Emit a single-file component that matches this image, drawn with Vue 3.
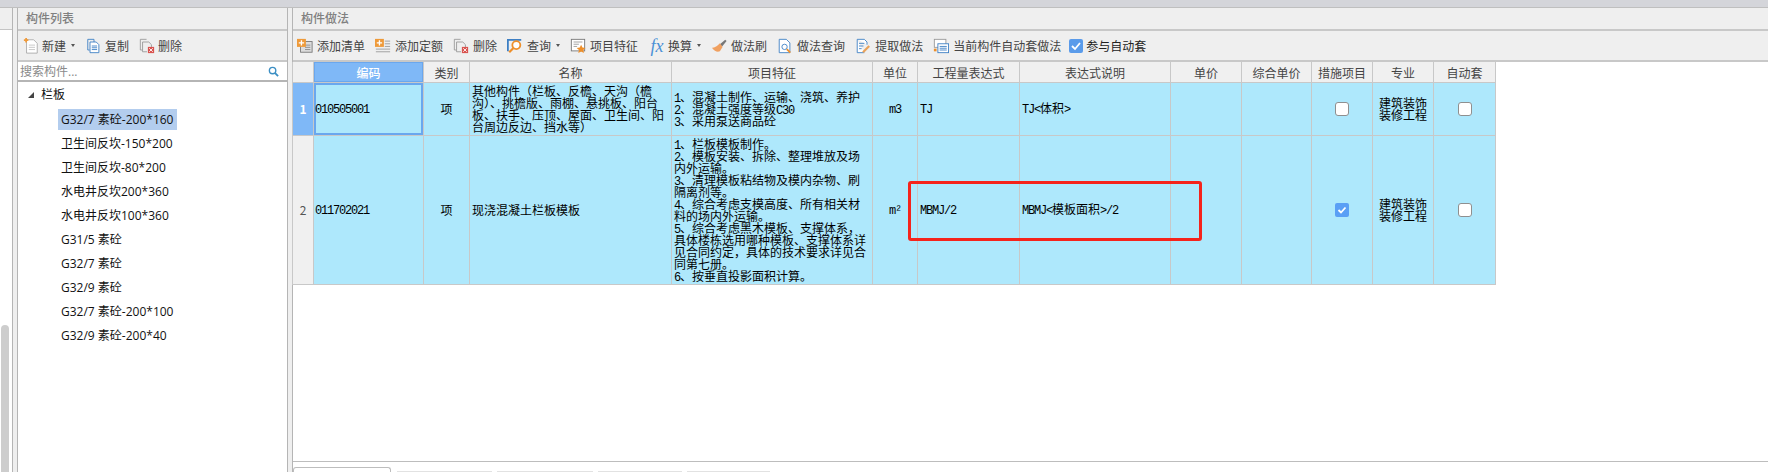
<template>
  <div class="page">
    <div class="top-strip"></div>
    <div class="panes">
      <!-- sliver of the navigation pane on the far left -->
      <div class="nav-pane">
        <div class="nav-head"></div>
        <div class="nav-body">
          <div class="nav-thumb"></div>
        </div>
      </div>

      <div class="list-pane">
        <div class="pane-title">构件列表</div>
        <div class="toolbar list-tools">
          <div class="tool">
            <svg class="ico" viewBox="0 0 18 18">
              <path d="M4 2h8l4 4v11H4z" fill="#fff" stroke="#a9a9a9" />
              <path d="M6.500 8h7M6.500 10.500h7M6.500 13h7" stroke="#c4c4c4" />
              <path d="M1 2.500h5M3.500 0v5" stroke="#ef9b3c" stroke-width="2" />
            </svg>
            <span>新建</span><i class="caret"></i>
          </div>
          <div class="tool">
            <svg class="ico" viewBox="0 0 18 18">
              <path d="M2 1.500h7v3" fill="none" stroke="#3d7fc4" />
              <path d="M2 1.500v12h2" fill="none" stroke="#3d7fc4" />
              <path d="M4.500 4.500h7l3 3v9h-10z" fill="#fff" stroke="#3d7fc4" />
              <path d="M6.500 9h6M6.500 11h6M6.500 13h6" stroke="#3d7fc4" />
            </svg>
            <span>复制</span>
          </div>
          <div class="tool">
            <svg class="ico" viewBox="0 0 18 18">
              <path d="M1.500 1.500h7M1.500 1.500v12h2" fill="none" stroke="#999" />
              <path d="M4 4.500h7l3 3v3M4 4.500v11h5" fill="none" stroke="#999" />
              <rect x="10" y="10" width="7" height="7" fill="#d9534f" />
              <path d="M11.500 11.500l4 4M15.500 11.500l-4 4" stroke="#fff" />
            </svg>
            <span>删除</span>
          </div>
        </div>
        <div class="search">
          <span class="search-text">搜索构件...</span>
          <svg class="search-ico" viewBox="0 0 12 12">
            <circle cx="5" cy="5" r="3.500" fill="none" stroke="#3c8fc4" stroke-width="1.500" />
            <path d="M7.500 7.500l3.500 3.500" stroke="#3c8fc4" stroke-width="2" />
          </svg>
        </div>
        <div class="tree">
          <div class="tree-root"><i class="tree-arrow"></i>栏板</div>
          <div
            v-for="(item, i) in treeItems"
            :key="item"
            class="tree-item"
          >
            <span :class="{ picked: i === 0 }">{{ item }}</span>
          </div>
        </div>
      </div>

      <div class="main-pane">
        <div class="pane-title">构件做法</div>
        <div class="toolbar main-tools">
          <div class="tool">
            <svg class="ico" viewBox="0 0 18 18">
              <rect x="4" y="4" width="13" height="12" fill="#ddd" stroke="#777" />
              <path d="M9 8h6M9 10.500h6M9 13h6" stroke="#888" />
              <rect x="0" y="1" width="10" height="9" fill="#ee9a3a" />
              <path d="M2 5.500h6M5 2.500v6" stroke="#fff" stroke-width="1.500" />
            </svg>
            <span>添加清单</span>
          </div>
          <div class="tool">
            <svg class="ico" viewBox="0 0 18 18">
              <rect x="0" y="1" width="10" height="9" fill="#ee9a3a" />
              <path d="M2 5.500h6M5 2.500v6" stroke="#fff" stroke-width="1.500" />
              <path d="M11 3.500h6M11 6.500h6M11 9.500h6M1 12.500h16M1 15.500h16" stroke="#999" />
            </svg>
            <span>添加定额</span>
          </div>
          <div class="tool">
            <svg class="ico" viewBox="0 0 18 18">
              <path d="M1.500 1.500h7M1.500 1.500v12h2" fill="none" stroke="#999" />
              <path d="M4 4.500h7l3 3v3M4 4.500v11h5" fill="none" stroke="#999" />
              <rect x="10" y="10" width="7" height="7" fill="#d9534f" />
              <path d="M11.500 11.500l4 4M15.500 11.500l-4 4" stroke="#fff" />
            </svg>
            <span>删除</span>
          </div>
          <div class="tool">
            <svg class="ico" viewBox="0 0 18 18">
              <path d="M1 15V2h15" fill="none" stroke="#3d7fc4" stroke-width="2" />
              <circle cx="10.500" cy="8" r="4.500" fill="#fff" stroke="#ee8f2a" stroke-width="2" />
              <path d="M7 11.500L2.500 16" stroke="#ee8f2a" stroke-width="2.500" />
            </svg>
            <span>查询</span><i class="caret"></i>
          </div>
          <div class="tool">
            <svg class="ico" viewBox="0 0 18 18">
              <rect x="1.500" y="1.500" width="15" height="13" fill="#fff" stroke="#777" />
              <path d="M4 4.500h10M4 7h6M4 9.500h4" stroke="#999" />
              <path d="M12.500 7.500l1.500 3.300 3.500.4-2.600 2.300.8 3.500-3.200-1.800-3.200 1.800.8-3.500-2.600-2.300 3.500-.4z" fill="#ee8f2a" />
            </svg>
            <span>项目特征</span>
          </div>
          <div class="tool fx-tool">
            <span class="fx">fx</span>
            <span>换算</span><i class="caret"></i>
          </div>
          <div class="tool">
            <svg class="ico" viewBox="0 0 18 18">
              <path d="M10 7l6-5 1.500 1.500-5 6z" fill="#777" />
              <path d="M10 6l3 4-3 5C7 16 4 15 1 11c3 0 5-1 9-5z" fill="#f0a060" />
            </svg>
            <span>做法刷</span>
          </div>
          <div class="tool">
            <svg class="ico" viewBox="0 0 18 18">
              <path d="M2.500 1.500h8l4 4v11h-12z" fill="#fff" stroke="#3d7fc4" />
              <circle cx="8.500" cy="10" r="3" fill="none" stroke="#3d7fc4" />
              <path d="M11 12.500l4 4" stroke="#ee8f2a" stroke-width="2" />
            </svg>
            <span>做法查询</span>
          </div>
          <div class="tool">
            <svg class="ico" viewBox="0 0 18 18">
              <path d="M2.500 1.500h8l3 3v3M2.500 1.500v15h8" fill="#fff" stroke="#3d7fc4" />
              <path d="M4.500 6h6M4.500 9h5M4.500 12h3" stroke="#3d7fc4" />
              <path d="M9 16l7-7" stroke="#e9a25a" stroke-width="2.500" />
            </svg>
            <span>提取做法</span>
          </div>
          <div class="tool">
            <svg class="ico" viewBox="0 0 18 18">
              <rect x="1.500" y="1.500" width="13" height="9" fill="#fff" stroke="#999" />
              <rect x="5.500" y="6.500" width="12" height="10" fill="#fff" stroke="#3d7fc4" />
              <path d="M7.500 9.500h8M7.500 11.500h8M7.500 13.500h8" stroke="#3d7fc4" />
              <rect x="1" y="12" width="3" height="3" fill="#ee8f2a" />
            </svg>
            <span>当前构件自动套做法</span>
          </div>
          <div class="tool check-tool">
            <svg class="check-box" viewBox="0 0 14 14">
              <rect width="14" height="14" rx="2" fill="#5a9bea" />
              <path d="M3 7l3 3 5-6" fill="none" stroke="#fff" stroke-width="1.800" />
            </svg>
            <span class="dark">参与自动套</span>
          </div>
        </div>

        <div class="table-wrap">
          <table class="grid">
            <colgroup>
              <col v-for="w in colWidths" :key="w.id" :style="{ width: w.px + 'px' }" />
            </colgroup>
            <thead>
              <tr>
                <th></th>
                <th class="on">编码</th>
                <th>类别</th>
                <th>名称</th>
                <th>项目特征</th>
                <th>单位</th>
                <th>工程量表达式</th>
                <th>表达式说明</th>
                <th>单价</th>
                <th>综合单价</th>
                <th>措施项目</th>
                <th>专业</th>
                <th>自动套</th>
              </tr>
            </thead>
            <tbody>
              <tr v-for="(row, r) in rows" :key="row.code" :style="{ height: row.h + 'px' }">
                <td class="row-no" :class="{ on: r === 0 }">{{ r + 1 }}</td>
                <td class="left code" :class="{ current: r === 0 }"><span class="latin">{{ row.code }}</span></td>
                <td class="mid">项</td>
                <td class="left">
                  <div v-for="line in row.name" :key="line" class="line">{{ line }}</div>
                </td>
                <td class="left">
                  <div v-for="line in row.feature" :key="line" class="line">
                    <span
                      v-for="(run, k) in splitRuns(line)"
                      :key="k"
                      :class="{ latin: run.latin }"
                    >{{ run.text }}</span>
                  </div>
                </td>
                <td class="mid"><span class="latin">{{ row.unit }}</span></td>
                <td class="left"><span class="latin">{{ row.expr }}</span></td>
                <td class="left">
                  <span
                    v-for="(run, k) in splitRuns(row.desc)"
                    :key="k"
                    :class="{ latin: run.latin }"
                  >{{ run.text }}</span>
                </td>
                <td></td>
                <td></td>
                <td class="mid">
                  <svg v-if="row.measure" class="cell-box" viewBox="0 0 14 14">
                    <rect width="14" height="14" rx="2" fill="#5a9ff5" />
                    <path d="M3.500 7l2.500 2.500 4.500-5" fill="none" stroke="#fff" stroke-width="1.800" />
                  </svg>
                  <span v-else class="cell-box empty"></span>
                </td>
                <td class="mid">
                  <div class="line">建筑装饰</div>
                  <div class="line">装修工程</div>
                </td>
                <td class="mid"><span class="cell-box empty"></span></td>
              </tr>
            </tbody>
          </table>
          <div class="red-mark"></div>
        </div>

        <div class="tabs">
          <div class="tab first"></div>
          <div v-for="w in tabWidths" :key="w" class="tab" :style="{ width: w + 'px' }"></div>
        </div>
      </div>
    </div>
  </div>
</template>

<script setup>
const treeItems = [
  "G32/7 素砼-200*160",
  "卫生间反坎-150*200",
  "卫生间反坎-80*200",
  "水电井反坎200*360",
  "水电井反坎100*360",
  "G31/5 素砼",
  "G32/7 素砼",
  "G32/9 素砼",
  "G32/7 素砼-200*100",
  "G32/9 素砼-200*40",
];

const colWidths = [21, 110, 46, 202, 201, 45, 102, 151, 71, 70, 61, 61, 62].map(
  (px, id) => ({ id, px })
);

const tabWidths = [95, 96, 84, 83];

const rows = [
  {
    code: "010505001",
    h: 53,
    name: [
      "其他构件（栏板、反檐、天沟（檐",
      "沟）、挑檐版、雨棚、悬挑板、阳台",
      "板、扶手、压顶、屋面、卫生间、阳",
      "台周边反边、挡水等）",
    ],
    feature: [
      "1、混凝土制作、运输、浇筑、养护",
      "2、混凝土强度等级C30",
      "3、采用泵送商品砼",
    ],
    unit: "m3",
    expr: "TJ",
    desc: "TJ<体积>",
    measure: false,
  },
  {
    code: "011702021",
    h: 149,
    name: ["现浇混凝土栏板模板"],
    feature: [
      "1、栏板模板制作。",
      "2、模板安装、拆除、整理堆放及场",
      "内外运输。",
      "3、清理模板粘结物及模内杂物、刷",
      "隔离剂等。",
      "4、综合考虑支模高度、所有相关材",
      "料的场内外运输。",
      "5、综合考虑黑木模板、支撑体系，",
      "具体楼栋选用哪种模板、支撑体系详",
      "见合同约定，具体的技术要求详见合",
      "同第七册。",
      "6、按垂直投影面积计算。",
    ],
    unit: "m²",
    expr: "MBMJ/2",
    desc: "MBMJ<模板面积>/2",
    measure: true,
  },
];

// ascii runs get the narrow mono face, like the half-width cells of the original
const splitRuns = (line) =>
  line.match(/[\x00-\x7f]+|[^\x00-\x7f]+/g).map((text) => ({
    text,
    latin: /^[\x00-\x7f]/.test(text),
  }));
</script>

<style>
html,
body {
  margin: 0;
  background: #fff;
  overflow: hidden;
}
</style>

<style scoped>
.page {
  width: 1768px;
  height: 472px;
  display: flex;
  flex-direction: column;
  overflow: hidden;
  font-family: "Open Sans", "Noto Sans CJK SC", sans-serif;
  font-size: 12px;
  color: #333;
}

.top-strip {
  height: 7px;
  flex: none;
  background: #d4d5da;
  border-bottom: 1px solid #bfbfbf;
}

.panes {
  flex: 1;
  display: flex;
  min-height: 0;
  background: #efefef;
}

.nav-pane {
  width: 12px;
  flex: none;
  display: flex;
  flex-direction: column;
  border-right: 1px solid #b5b5b5;
}

.nav-head {
  height: 21px;
  flex: none;
  border-bottom: 1px solid #c4c4c4;
}

.nav-body {
  flex: 1;
  background: #fff;
  display: flex;
  flex-direction: column;
  justify-content: flex-end;
  align-items: flex-start;
}

.nav-thumb {
  width: 8px;
  height: 147px;
  margin-left: 1px;
  background: #cdcdcd;
  border-radius: 4px 4px 0 0;
}

.list-pane {
  width: 269px;
  flex: none;
  margin-left: 4px;
  display: flex;
  flex-direction: column;
  border-left: 1px solid #b5b5b5;
  border-right: 1px solid #b5b5b5;
}

.main-pane {
  flex: 1;
  min-width: 0;
  margin-left: 4px;
  display: flex;
  flex-direction: column;
  border-left: 1px solid #b5b5b5;
}

.pane-title {
  height: 21px;
  flex: none;
  padding-left: 8px;
  line-height: 21px;
  font-size: 12px;
  font-weight: 500;
  color: #808080;
  border-bottom: 2px solid #c8c8c8;
}

.toolbar {
  height: 29px;
  flex: none;
  display: flex;
  align-items: center;
  border-bottom: 2px solid #c8c8c8;
  color: #444;
}

.list-tools {
  padding-left: 5px;
  gap: 10px;
}

.main-tools {
  padding-left: 4px;
  gap: 10px;
}

.tool {
  display: flex;
  align-items: center;
  gap: 4px;
  white-space: nowrap;
}

.list-tools .tool {
  gap: 3px;
}

.fx-tool {
  margin-left: 2px;
}

.check-tool {
  margin-left: -2px;
  gap: 3px;
}

.ico {
  width: 16px;
  height: 16px;
  flex: none;
}

.caret {
  width: 0;
  height: 0;
  margin-left: 1px;
  border-left: 2.500px solid transparent;
  border-right: 2.500px solid transparent;
  border-top: 3px solid #555;
}

.list-tools .caret {
  margin-left: 2px;
  margin-right: 1px;
}

.fx {
  width: 14px;
  font-family: "Liberation Serif", serif;
  font-style: italic;
  font-size: 18px;
  line-height: 18px;
  color: #4a8fd6;
  text-align: center;
}

.check-box {
  width: 14px;
  height: 14px;
  flex: none;
}

.dark {
  color: #222;
}

.search {
  height: 18px;
  flex: none;
  display: flex;
  align-items: center;
  justify-content: space-between;
  padding: 0 8px 0 2px;
  background: #fff;
  border-bottom: 2px solid #b5b5b5;
}

.search-text {
  color: #8a8a8a;
}

.search-ico {
  width: 11px;
  height: 11px;
}

.tree {
  flex: 1;
  background: #fff;
  color: #111;
  padding-top: 1px;
}

.tree-root {
  height: 24px;
  line-height: 24px;
  padding-left: 10px;
  display: flex;
  align-items: center;
}

.tree-arrow {
  width: 0;
  height: 0;
  margin-right: 7px;
  border-left: 6px solid transparent;
  border-bottom: 6px solid #444;
}

.tree-item {
  height: 24px;
  display: flex;
  align-items: center;
  padding-left: 40px;
}

.tree-item span {
  padding: 0 4px 0 3px;
  height: 21px;
  line-height: 21px;
}

.tree-item .picked {
  background: #b3cdee;
}

.table-wrap {
  position: relative;
  flex: 1;
  min-height: 0;
  background: #fff;
  border-bottom: 1px solid #bdbdbd;
}

.grid {
  table-layout: fixed;
  width: 1203px;
  margin-left: -1px;
  border-collapse: collapse;
  font-family: "Noto Sans CJK SC", sans-serif;
}

th {
  height: 20px;
  padding: 0;
  font-size: 12px;
  font-weight: 400;
  color: #444;
  background: #f0f0f0;
  border: 1px solid #c8c8c8;
  border-top: 0;
}

th.on {
  color: #fff;
  font-weight: 500;
  background: #7fb8f7;
  box-shadow: inset 0 0 0 1px #6aa7ee;
}

td {
  padding: 0;
  font-size: 12px;
  line-height: 12px;
  color: #000;
  background: #aee8fc;
  border: 1px solid #c8c8c8;
  white-space: nowrap;
}

td.left {
  padding-left: 2px;
}

td.left.code {
  padding-left: 1px;
}

td.mid {
  text-align: center;
}

td.row-no {
  text-align: center;
  color: #555;
  background: #f0f0f0;
}

td.row-no.on {
  color: #fff;
  font-weight: 700;
  background: #7fb8f7;
}

td.current {
  box-shadow: inset 0 0 0 2px #6aa7ee;
}

.line {
  height: 12px;
  line-height: 12px;
}

.latin {
  font-family: "Liberation Mono", monospace;
  font-size: 12px;
  letter-spacing: -1.200px;
}

.cell-box {
  width: 14px;
  height: 14px;
  display: inline-block;
  vertical-align: middle;
  box-sizing: border-box;
}

.cell-box.empty {
  background: #fff;
  border: 1px solid #8f8f8f;
  border-radius: 3px;
}

.red-mark {
  position: absolute;
  left: 615px;
  top: 119px;
  width: 294px;
  height: 60px;
  box-sizing: border-box;
  border: 3px solid #f5231b;
  border-radius: 3px;
}

.tabs {
  height: 10px;
  flex: none;
  display: flex;
  align-items: flex-end;
  gap: 5px;
  background: #fff;
}

.tab {
  height: 1px;
  background: #e2e2e2;
  box-sizing: border-box;
}

.tab.first {
  width: 98px;
  height: 5px;
  margin-right: 1px;
  background: #fff;
  border: 1px solid #bdbdbd;
  border-bottom: 0;
  border-radius: 3px 3px 0 0;
}
</style>
